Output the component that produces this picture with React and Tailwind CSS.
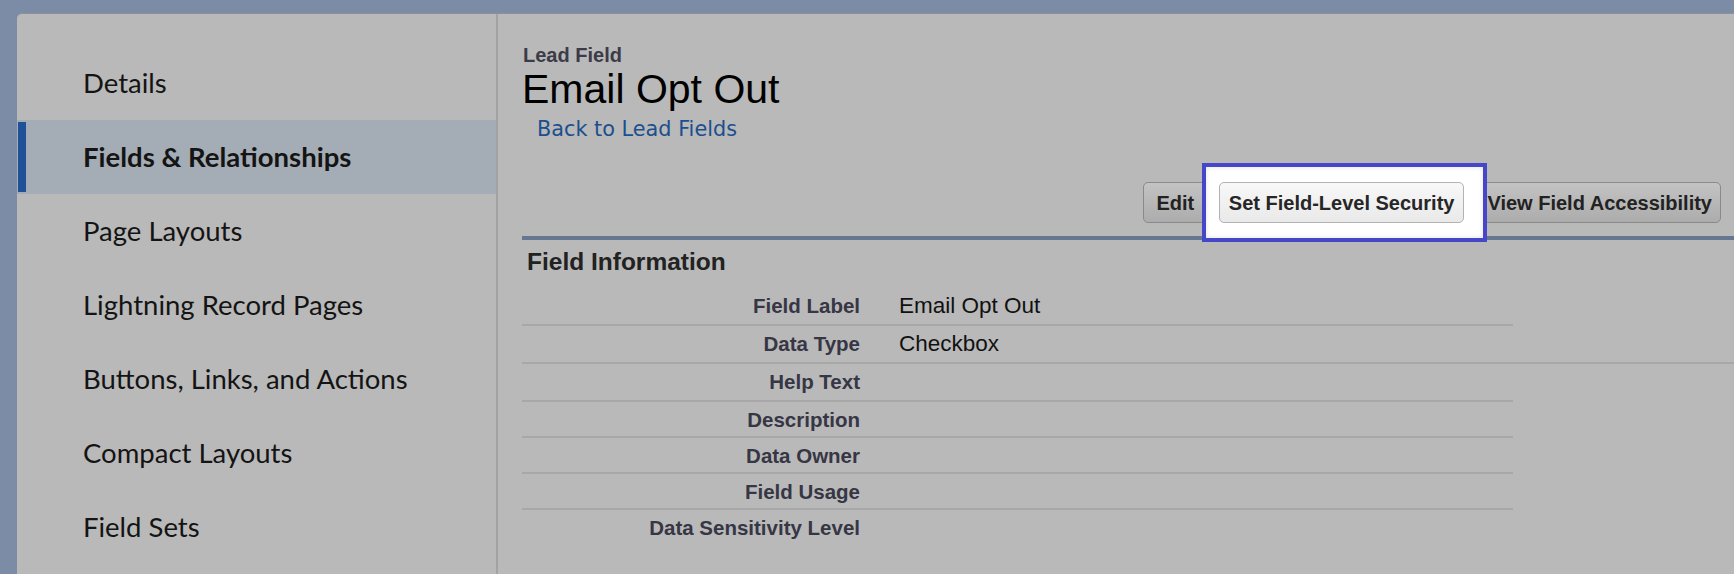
import React from 'react';

const navItems = [
  'Details',
  'Fields & Relationships',
  'Page Layouts',
  'Lightning Record Pages',
  'Buttons, Links, and Actions',
  'Compact Layouts',
  'Field Sets',
];

// row heights include the 2px bottom rule
const fieldRows = [
  { label: 'Field Label', value: 'Email Opt Out', h: 'h-[38px]', w: 'w-[991px]' },
  { label: 'Data Type', value: 'Checkbox', h: 'h-[38px]', w: 'self-stretch' },
  { label: 'Help Text', value: '', h: 'h-[38px]', w: 'w-[991px]' },
  { label: 'Description', value: '', h: 'h-[36px]', w: 'w-[991px]' },
  { label: 'Data Owner', value: '', h: 'h-[36px]', w: 'w-[991px]' },
  { label: 'Field Usage', value: '', h: 'h-[36px]', w: 'w-[991px]' },
  { label: 'Data Sensitivity Level', value: '', h: 'h-[34px]', w: 'w-[991px]', last: true },
];

const Sidebar = ({ active }) => (
  <nav className="w-[481px] shrink-0 border-r-2 border-[#a3a3a3] pt-[32px]">
    {navItems.map((item) => {
      const isActive = item === active;
      return (
        <div
          key={item}
          className={`flex h-[74px] items-center ${isActive ? 'bg-[#a4acb5]' : ''}`}
        >
          <span
            className={`my-[2px] ml-[1px] w-[8px] self-stretch ${isActive ? 'bg-[#1f5199]' : ''}`}
          />
          <span
            className={`ml-[57px] font-['Lato',sans-serif] text-[27.5px] text-[#141414] ${
              isActive ? 'font-bold' : ''
            }`}
          >
            {item}
          </span>
        </div>
      );
    })}
  </nav>
);

const ClassicButton = ({ children, className = '' }) => (
  <button
    className={`flex h-[41px] items-center justify-center rounded-[5px] border border-[#8a8a8a] bg-linear-to-b from-[#c3c3c3] to-[#acacac] text-[20px] font-bold text-[#222] ${className}`}
  >
    {children}
  </button>
);

export default function App() {
  return (
    <div className="h-[574px] overflow-hidden bg-[#7d8ca6] pl-[17px] pt-[13px] font-['Liberation_Sans',Arial,sans-serif]">
      <div className="flex h-full rounded-tl-[5px] border-t border-[#8f9196] bg-[#b9b9b9]">
        <Sidebar active="Fields & Relationships" />

        <main className="min-w-0 flex-1 pl-[22px] pt-[30px]">
          <div className="ml-[3px] text-[20px] font-bold leading-[23px] text-[#3b3b49]">Lead Field</div>
          <h1 className="ml-[2px] mt-[2px] text-[41px] leading-[40px] text-black">Email Opt Out</h1>
          <a className="ml-[17px] mt-[8px] block font-['DejaVu_Sans',Verdana,sans-serif] text-[20.8px] leading-[24px] text-[#1b4f8d]">
            Back to Lead Fields
          </a>

          <div className="mt-[41px] flex justify-end pr-[13px]">
            <ClassicButton className="w-[65px]">Edit</ClassicButton>
            <div className="relative ml-[11px]">
              <div className="absolute -bottom-[19px] -left-[17px] -right-[23px] -top-[19px] z-10 border-4 border-[#4646c9] bg-white shadow-[inset_0_0_5px_rgba(0,0,0,0.12)]" />
              <button className="relative z-20 flex h-[41px] items-center rounded-[5px] border border-[#b2b2b2] bg-linear-to-b from-[#f8f8f8] to-[#e9e9e9] px-[9px] text-[20px] font-bold text-[#262626]">
                Set Field-Level Security
              </button>
            </div>
            <ClassicButton className="ml-[14px] px-[8px]">View Field Accessibility</ClassicButton>
          </div>

          <div className="ml-[2px] mt-[13px] h-[4px] bg-[#687791]" />

          <h2 className="ml-[7px] mt-[8px] text-[24.5px] font-bold leading-[28px] text-[#222]">Field Information</h2>

          <div className="ml-[2px] mt-[12px] flex flex-col">
            {fieldRows.map((row) => (
              <div
                key={row.label}
                className={`flex shrink-0 items-start ${row.h} ${row.w} ${row.last ? '' : 'border-b-2 border-[#a8a8a8]'}`}
              >
                <div className="w-[338px] shrink-0 pt-[6px] text-right text-[20.5px] font-bold leading-[23px] text-[#363644]">
                  {row.label}
                </div>
                <div className="pl-[39px] pt-[5px] text-[22.5px] leading-[25px] text-[#111]">{row.value}</div>
              </div>
            ))}
          </div>
        </main>
      </div>
    </div>
  );
}
